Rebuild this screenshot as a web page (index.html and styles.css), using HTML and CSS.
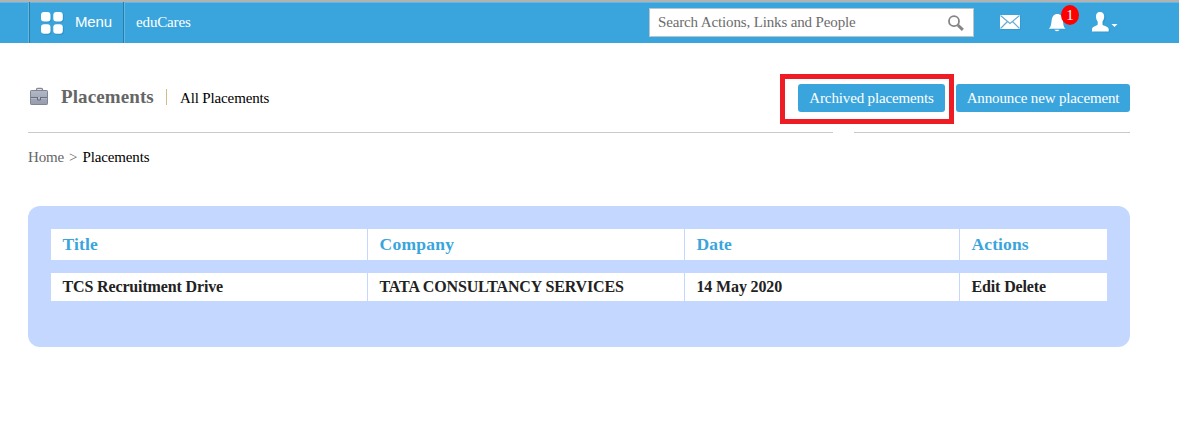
FILE: index.html
```html
<!DOCTYPE html>
<html lang="en">
<head>
<meta charset="utf-8">
<title>Placements</title>
<link rel="stylesheet" href="styles.css">
</head>
<body>
<header class="topbar">
  <a class="menu">
    <svg class="menu-icon" width="25" height="25" viewBox="0 0 25 25"><g fill="#2585b4" opacity=".45"><rect x="1.500" y="1.500" width="10" height="10" rx="3.200"/><rect x="14" y="1.500" width="10" height="10" rx="3.200"/><rect x="1.500" y="14" width="10" height="10" rx="3.200"/><rect x="14" y="14" width="10" height="10" rx="3.200"/></g><g fill="#fff"><rect x="1" y="1" width="9.500" height="9.500" rx="3"/><rect x="13.300" y="1" width="9.500" height="9.500" rx="3"/><rect x="1" y="13.300" width="9.500" height="9.500" rx="3"/><rect x="13.300" y="13.300" width="9.500" height="9.500" rx="3"/></g></svg>
    <span class="menu-label">Menu</span>
  </a>
  <span class="brand">eduCares</span>
  <div class="search">
    <span class="search-text">Search Actions, Links and People</span>
    <svg width="17" height="17" viewBox="0 0 17 17" fill="none" stroke="#858585"><circle cx="6" cy="6.200" r="5" stroke-width="1.800"/><path d="M9.800 10l5 4.800" stroke-width="3"/></svg>
  </div>
  <svg class="mail" width="22" height="17" viewBox="0 0 22 17"><rect x="1" y="2" width="20" height="14" fill="#2585b4" opacity=".3"/><rect width="20" height="14" y="1" fill="#fff"/><path d="M.5 1.500l9.500 8 9.500-8M.5 14.500l7-7M19.500 14.500l-7-7" fill="none" stroke="#65acd2" stroke-width="1.200"/></svg>
  <div class="bell">
    <svg width="20" height="20" viewBox="0 0 20 20"><path d="M2 17.500c2-2 2-4 2.500-8C5 5 7 3 10 3S15 5 15.500 9.500c.5 4 .5 6 2.500 8z" fill="#2585b4" opacity=".3"/><path d="M.8 16.700c2.400-2 2.200-4.500 2.800-8C4 4.500 6 2 9.300 2S14.600 4.500 15 8.700c.4 3.500.2 6 2.600 8z" fill="#fff"/><path d="M6.500 17.800h5c-.5 1.800-4.500 1.800-5 0z" fill="#fff"/></svg>
    <span class="badge">1</span>
  </div>
  <svg class="user" width="28" height="23" viewBox="0 0 28 23"><path d="M9 1c3 0 4.500 2 4.200 5-.2 2.400-1 3.700-1.700 4.600v2.800c.8 1.700 5.500 1.300 6 4.600v2.500H1V18c.5-3.300 5-2.900 5.700-4.600v-2.800C5.900 9.700 5.200 8.400 5 6c-.3-3 1-5 4-5z" fill="#2585b4" opacity=".35" transform="translate(1.500 1)"/><path d="M9 1c3 0 4.500 2 4.200 5-.2 2.400-1 3.700-1.700 4.600v2.800c.8 1.700 5.700 1.300 6.200 4.600v2.500H1v-2.500c.5-3.300 5-2.900 5.700-4.600v-2.800C5.900 9.700 5.200 8.400 5 6c-.3-3 1-5 4-5z" fill="#fff"/><path d="M20.500 13h6l-3 3z" fill="#fff"/></svg>
</header>
<main class="page">
  <div class="heading">
    <div class="heading-left">
      <svg class="case" width="20" height="20" viewBox="0 0 20 20"><defs><linearGradient id="cg" x1="0" y1="0" x2="0" y2="1"><stop offset="0" stop-color="#b4b9c6"/><stop offset="1" stop-color="#969cad"/></linearGradient></defs><path d="M6.500 5V3.500q0-1 1-1h4q1 0 1 1V5" fill="none" stroke="#858a99" stroke-width="1.300"/><rect x=".5" y="4.500" width="17" height="14" rx=".7" fill="url(#cg)" stroke="#808595"/><path d="M1 11.500h16" stroke="#6d7282"/><path d="M1 12.500h16" stroke="#bec2cd" stroke-width=".6"/><path d="M7.500 11v3h3v-3" fill="#b4b9c6" stroke="#666b7b"/></svg>
      <h1 class="title">Placements</h1>
      <span class="bar"></span>
      <span class="subtitle">All Placements</span>
    </div>
    <div class="heading-right">
      <a class="button archived">Archived placements<span class="highlight"></span></a>
      <a class="button announce">Announce new placement</a>
    </div>
  </div>
  <nav class="crumbs"><span class="home">Home</span><span class="sep">&gt;</span><span class="here">Placements</span></nav>
  <section class="panel">
    <div class="row head"><span>Title</span><span class="company">Company</span><span>Date</span><span>Actions</span></div>
    <div class="row"><span>TCS Recruitment Drive</span><span>TATA CONSULTANCY SERVICES</span><span>14 May 2020</span><span>Edit Delete</span></div>
  </section>
</main>
</body>
</html>
```
FILE: styles.css
```css
* { box-sizing: border-box; }
body { margin: 0; background: #fff; font: 15px/20px "Liberation Serif", serif; letter-spacing: -.14px; color: #000; white-space: nowrap; }
svg { display: block; flex: none; }
.topbar { display: flex; height: 43px; background: #3aa5dd; border-top: 2px solid #b2b2b2; box-shadow: inset 0 1px #62b7e3; color: #fff; }
.menu { display: flex; width: 97px; height: 41px; margin-left: 28px; border-left: 1px solid #62b7e3; border-right: 1px solid #62b7e3; box-shadow: inset 1px 0 #2b7ca7, inset -1px 0 #2b7ca7; }
.menu-icon { margin: 9px 0 0 11px; }
.menu-label { margin: 10px 0 0 10px; font: 15px/20px "Liberation Sans", sans-serif; }
.brand { width: 55px; margin: 10px 0 0 11px; }
.search { display: flex; justify-content: space-between; width: 325px; height: 29px; margin: 6px 0 0 458px; padding: 6px 8px 0 8px; background: #fff; border: 1px solid #b9c5cb; color: #6c6c6c; }
.search-text { line-height: 16px; margin-top: -1px; }
.mail { margin: 12px 0 0 26px; }
.bell { position: relative; margin: 10px 0 0 26px; }
.badge { position: absolute; left: 13px; top: -7px; width: 18px; height: 20px; border-radius: 50%; background: #f00; text-align: center; line-height: 20px; }
.user { margin: 9px 0 0 23px; }
.page { width: 1102px; margin-left: 28px; }
.heading { display: flex; justify-content: space-between; height: 90px; }
.heading-left { display: flex; width: 805px; border-bottom: 1px solid #c9c9c9; }
.case { margin: 43px 0 0 2px; }
.title { width: 93px; margin: 44px 0 0 11px; font-size: 19px; line-height: 20px; letter-spacing: .1px; color: #666; }
.bar { width: 1px; height: 16px; margin: 46px 0 0 12px; background: #d8b98c; }
.subtitle { margin: 45px 0 0 13px; }
.heading-right { display: flex; justify-content: flex-end; gap: 11px; width: 276px; border-bottom: 1px solid #c9c9c9; }
.button { position: relative; flex: none; height: 28px; margin-top: 41px; border-radius: 3px; background: #3aa5dd; color: #fff; text-align: center; line-height: 28px; }
.archived { width: 147px; }
.announce { width: 174px; }
.highlight { position: absolute; left: -18px; top: -10px; width: 174px; height: 50px; border: 5px solid #ee1c24; }
.crumbs { display: flex; margin-top: 14px; }
.home, .sep { color: #666; }
.sep { margin: 0 5px; }
.panel { height: 141px; margin-top: 39px; padding: 23px; border-radius: 12px; background: #c4d8ff; }
.row { display: grid; grid-template-columns: 316px 316px 274px 147px; gap: 1px; height: 28px; color: #222; font-size: 16px; font-weight: bold; line-height: 28px; }
.row > span { padding-left: 11.500px; background: #fff; }
.head { height: 31px; margin-bottom: 13px; color: #3aa5dd; font-size: 17.500px; line-height: 31px; letter-spacing: .12px; }
.company { letter-spacing: .25px; }
```
